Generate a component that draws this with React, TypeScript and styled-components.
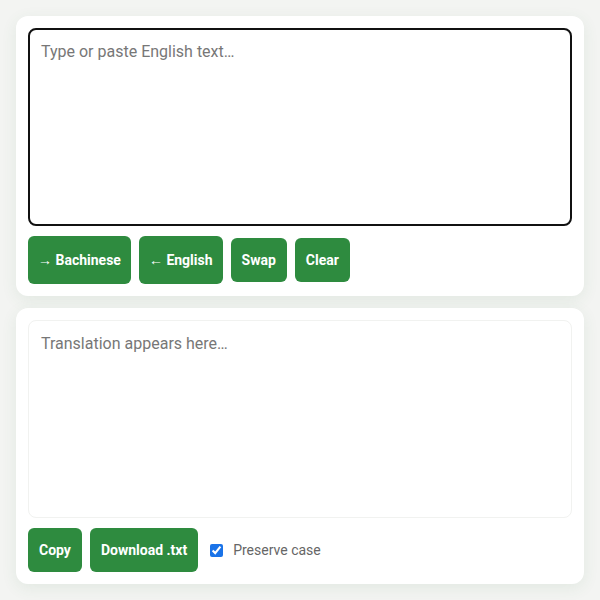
import React, { FC, useState } from 'react'
import styled, { createGlobalStyle } from 'styled-components'

const GlobalStyle = createGlobalStyle`
  html, body {
    margin: 0;
    padding: 0;
    background: #f3f4f2;
    font-family: Roboto, "Liberation Sans", Arial, sans-serif;
  }
`

export default function App() {
  const [text, setText] = useState('')
  const [preserve, setPreserve] = useState(true)
  return (
    <>
      <GlobalStyle />
      <Page>
        <Card>
          <Input
            autoFocus
            value={text}
            onChange={e => setText(e.target.value)}
            placeholder="Type or paste English text…"
          />
          <Row>
            <Button tall>→ Bachinese</Button>
            <Button tall>← English</Button>
            <Button>Swap</Button>
            <Button onClick={() => setText('')}>Clear</Button>
          </Row>
        </Card>
        <Card>
          <Output>
            <Placeholder>Translation appears here…</Placeholder>
          </Output>
          <Row>
            <Button>Copy</Button>
            <Button>Download .txt</Button>
            <CheckLabel>
              <Check
                type="checkbox"
                checked={preserve}
                onChange={e => setPreserve(e.target.checked)}
              />
              Preserve case
            </CheckLabel>
          </Row>
        </Card>
      </Page>
    </>
  )
}

const Page = styled.div`
  padding: 16px;
  display: flex;
  flex-direction: column;
  gap: 12px;
`

const Card = styled.section`
  background: #fff;
  border-radius: 12px;
  padding: 12px;
  display: flex;
  flex-direction: column;
  gap: 10px;
  box-shadow: 0 4px 16px rgba(60, 120, 70, 0.09);
`

const Input = styled.textarea`
  box-sizing: border-box;
  width: 100%;
  height: 198px;
  resize: none;
  border: 2px solid #111;
  border-radius: 8px;
  padding: 10px 11px;
  font-family: Roboto, "Liberation Sans", Arial, sans-serif;
  font-size: 16px;
  line-height: 24px;
  color: #222;
  outline: none;
  &::placeholder {
    color: #777;
  }
`

const Output = styled.div`
  box-sizing: border-box;
  height: 198px;
  border: 1px solid #f1f2f0;
  border-radius: 8px;
  padding: 11px 12px;
`

const Placeholder = styled.div`
  font-size: 16px;
  line-height: 24px;
  color: #777;
`

const Row = styled.div`
  display: flex;
  align-items: center;
  gap: 8px;
`

const Button = styled.button<{ tall?: boolean }>`
  height: ${p => (p.tall ? '48px' : '44px')};
  padding: 0 ${p => (p.tall ? '10px' : '11px')};
  border: none;
  border-radius: 6px;
  background: #2e8b3f;
  color: #fff;
  font-family: Roboto, "Liberation Sans", Arial, sans-serif;
  font-weight: 700;
  font-size: 14px;
  cursor: pointer;
`

const CheckLabel = styled.label`
  display: flex;
  align-items: center;
  gap: 10px;
  margin-left: 4px;
  font-size: 14px;
  color: #666;
`

const Check = styled.input`
  width: 13px;
  height: 13px;
  margin: 0;
  accent-color: #1a73e8;
`
